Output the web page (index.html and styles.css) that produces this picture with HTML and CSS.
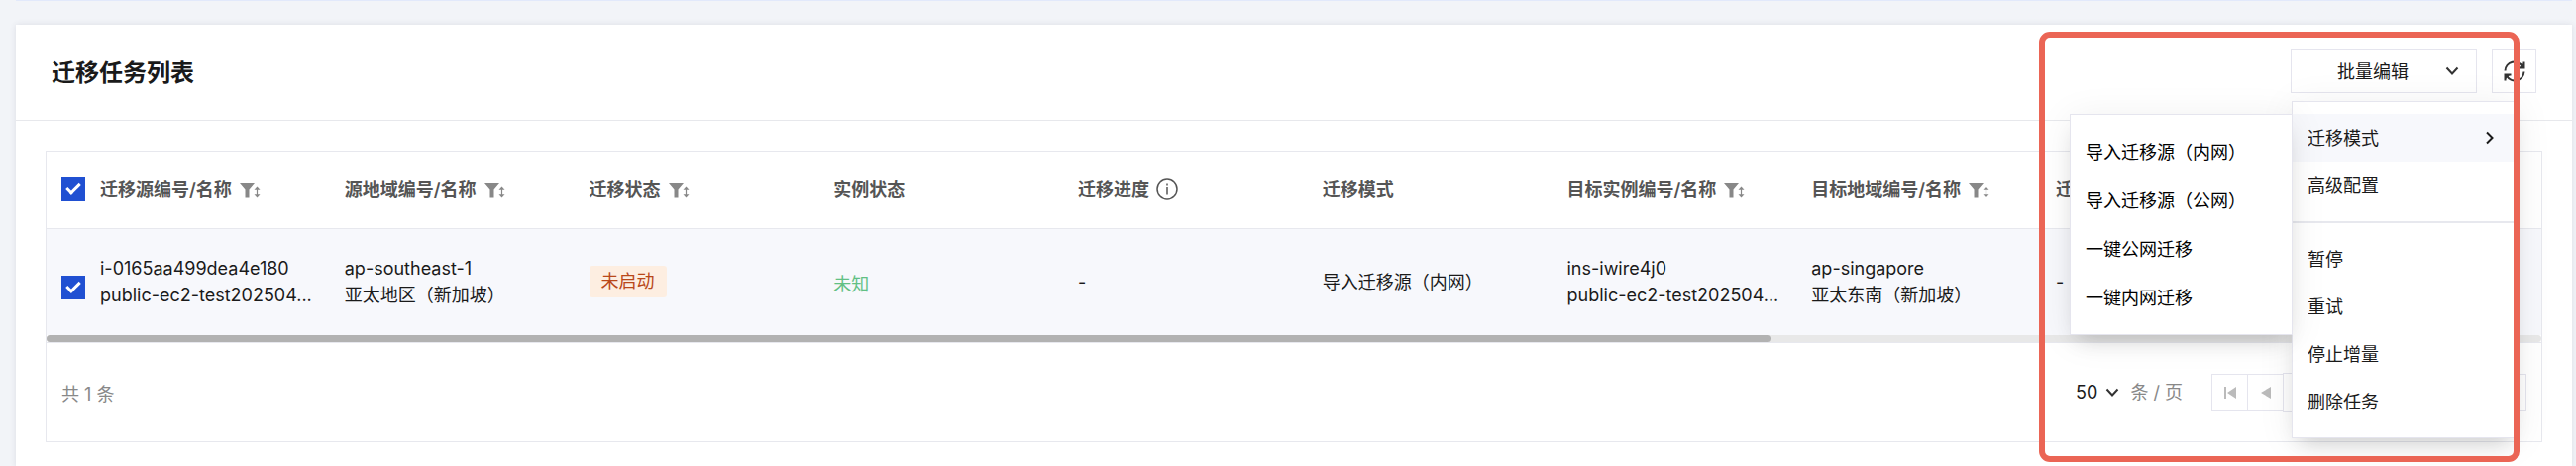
FILE: index.html
```html
<!DOCTYPE html>
<html lang="zh-CN">
<head>
<meta charset="utf-8">
<title>迁移任务列表</title>
<link rel="stylesheet" href="styles.css">
</head>
<body>
<svg class="sprite" aria-hidden="true">
  <symbol id="filter" viewBox="0 0 21 16">
    <path fill="#888" d="M0 1h15l-5.500 6.500V15.500h-4V7.500z"/>
    <path fill="none" stroke="#888" stroke-width="1.200" d="M17.500 6.500v7"/>
    <path fill="#888" d="M17.500 4.500l3 3.200h-6zM17.500 15.500l3-3.200h-6z"/>
  </symbol>
  <symbol id="down" viewBox="0 0 14 10">
    <path fill="none" stroke="currentColor" stroke-width="2" d="M1.500 1.500L7 7.500l5.500-6"/>
  </symbol>
</svg>
<main class="panel">
  <header class="panel-head">
    <h1 class="title">迁移任务列表</h1>
    <div class="tools">
      <div class="dropdown">
        <button class="dropdown-btn" type="button"><span class="dropdown-label">批量编辑</span><svg class="chevron"><use href="#down"/></svg></button>
        <div class="menu">
          <button class="item item-active" type="button">迁移模式<svg class="arrow" viewBox="0 0 10 14"><path fill="none" stroke="currentColor" stroke-width="2" d="M2 1.500L7.500 7L2 12.500"/></svg></button>
          <button class="item" type="button">高级配置</button>
          <hr class="divider">
          <button class="item" type="button">暂停</button>
          <button class="item" type="button">重试</button>
          <button class="item" type="button">停止增量</button>
          <button class="item" type="button">删除任务</button>
          <div class="submenu">
            <button class="item" type="button">导入迁移源（内网）</button>
            <button class="item" type="button">导入迁移源（公网）</button>
            <button class="item" type="button">一键公网迁移</button>
            <button class="item" type="button">一键内网迁移</button>
          </div>
        </div>
      </div>
      <button class="refresh" type="button" aria-label="刷新"><svg class="refresh-icon" viewBox="0 0 22 22"><path fill="none" stroke="currentColor" stroke-width="2" d="M1.500 10.500A9.300 9.300 0 0 1 19 6.500M20.500 1.500v6h-6M20.500 11.500A9.300 9.300 0 0 1 3 15.500M1.500 20.500v-6h6"/><path fill="currentColor" d="M20.500 2.500v5h-5zM1.500 19.500v-5h5z"/></svg></button>
    </div>
  </header>
  <section class="grid">
    <div class="scroller">
      <table class="table">
        <colgroup><col class="col-check"><col class="col"><col class="col"><col class="col"><col class="col"><col class="col"><col class="col"><col class="col"><col class="col"><col></colgroup>
        <thead>
          <tr>
            <th class="check"><input class="box" type="checkbox" checked aria-label="全选"></th>
            <th>迁移源编号/名称<svg class="filter"><use href="#filter"/></svg></th>
            <th>源地域编号/名称<svg class="filter"><use href="#filter"/></svg></th>
            <th>迁移状态<svg class="filter"><use href="#filter"/></svg></th>
            <th>实例状态</th>
            <th>迁移进度<svg class="info" viewBox="0 0 22 22"><circle cx="11" cy="11" r="10" fill="none" stroke="currentColor" stroke-width="1.500"/><path fill="none" stroke="currentColor" stroke-width="1.500" d="M11 9v7.500M11 5.500v2"/></svg></th>
            <th>迁移模式</th>
            <th>目标实例编号/名称<svg class="filter"><use href="#filter"/></svg></th>
            <th>目标地域编号/名称<svg class="filter"><use href="#filter"/></svg></th>
            <th>迁移</th>
          </tr>
        </thead>
        <tbody>
          <tr>
            <td class="check check-low"><input class="box" type="checkbox" checked aria-label="选择 i-0165aa499dea4e180"></td>
            <td>i-0165aa499dea4e180<br>public-ec2-test202504...</td>
            <td>ap-southeast-1<br>亚太地区（新加坡）</td>
            <td><span class="tag">未启动</span></td>
            <td><span class="unknown">未知</span></td>
            <td>-</td>
            <td>导入迁移源（内网）</td>
            <td>ins-iwire4j0<br>public-ec2-test202504...</td>
            <td>ap-singapore<br>亚太东南（新加坡）</td>
            <td>-</td>
          </tr>
        </tbody>
      </table>
      <div class="track"><div class="thumb"></div></div>
    </div>
    <footer class="foot">
      <span class="total">共 1 条</span>
      <div class="pager">
        <button class="size" type="button">50<svg class="chevron"><use href="#down"/></svg></button>
        <span class="unit">条 / 页</span>
        <div class="pages">
          <button class="page" type="button" aria-label="首页"><svg class="page-icon" viewBox="0 0 14 14"><path fill="#bbb" d="M1 1h2v12H1zM13 1v12L4 7z"/></svg></button>
          <button class="page" type="button" aria-label="上一页"><svg class="page-icon" viewBox="0 0 14 14"><path fill="#bbb" d="M12 1v12L2 7z"/></svg></button>
          <input class="jump" type="text" aria-label="页码">
          <button class="page" type="button" aria-label="下一页"></button>
          <button class="page" type="button" aria-label="末页"></button>
        </div>
      </div>
    </footer>
  </section>
  <div class="marker"></div>
</main>
</body>
</html>
```
FILE: styles.css
```css
*, *::before, *::after { box-sizing: border-box; }
body {
  margin: 0;
  min-height: 100vh;
  padding: 24px 4px 0 16px;
  display: flex;
  flex-direction: column;
  background: #f2f4f8;
  color: #1a1a1a;
  font: 18px/27px Inter, "Noto Sans CJK SC", sans-serif;
}
body::before {
  content: "";
  height: 1px;
  margin: -24px 0 24px;
  background: #e2e9fb;
}
button, input { font: inherit; color: inherit; }
button { cursor: pointer; }
.sprite { display: none; }
.panel {
  position: relative;
  flex: 1;
  background: #fff;
  box-shadow: 0 0 6px rgba(54, 58, 80, .12);
}
.panel-head {
  display: flex;
  align-items: flex-start;
  justify-content: space-between;
  height: 97px;
  padding: 24px 36px 0;
  border-bottom: 1px solid #e7e8ec;
}
.title { margin: 0; font-size: 24px; line-height: 50px; font-weight: 600; }
.tools { display: flex; gap: 15px; }
.dropdown { position: relative; }
.dropdown-btn {
  display: flex;
  align-items: center;
  width: 188px;
  height: 45px;
  padding: 0 17px 0 9px;
  background: #fff;
  border: 1px solid #e5e5ee;
}
.dropdown-label { flex: 1; padding-top: 2px; }
.chevron { width: 14px; height: 10px; color: #333; }
.refresh {
  display: flex;
  align-items: center;
  justify-content: center;
  width: 45px;
  height: 45px;
  padding: 0;
  background: #fff;
  border: 1px solid #e5e5ee;
}
.refresh-icon { width: 22px; height: 22px; color: #333; }
.menu, .submenu {
  position: absolute;
  background: #fff;
  border: 1px solid #e5e5ee;
  box-shadow: 0 12px 20px -8px rgba(0, 0, 0, .16), 0 4px 36px rgba(0, 0, 0, .07);
}
.menu { z-index: 2; top: 53px; left: 1px; width: 228px; padding: 12px 0; }
.submenu { top: 12px; right: 100%; width: 225px; padding: 13px 0 12px; }
.item {
  display: flex;
  align-items: center;
  justify-content: space-between;
  width: 100%;
  height: 48px;
  padding: 0 22px 0 15px;
  background: none;
  border: 0;
  text-align: left;
}
.submenu .item { height: 49px; color: #000; }
.item-active { background: #f7f8fc; }
.arrow { width: 10px; height: 14px; }
.divider { height: 2px; margin: 12px 0; border: 0; background: #e7e8ee; }
.grid { margin: 30px 30px 25px; border: 1px solid #e7e8ee; }
.scroller { overflow: hidden; border-bottom: 1px solid #e7e8ee; }
.table { width: 100%; table-layout: fixed; border-collapse: collapse; }
.col-check { width: 40px; }
.col { width: 9.8%; }
th, td { padding: 0 0 0 14px; text-align: left; white-space: nowrap; }
th {
  height: 77px;
  color: #555;
  font-weight: 600;
  border-bottom: 1px solid #e7e8ee;
}
td { height: 108px; background: #f7f8fc; }
.check { padding: 0 0 0 15px; }
.check-low { padding-top: 12px; }
.box {
  display: block;
  appearance: none;
  width: 24px;
  height: 24px;
  margin: 0;
  background: #2050d2;
  position: relative;
}
.box::after {
  content: "";
  position: absolute;
  left: 5px;
  top: 6px;
  width: 14px;
  height: 8px;
  border: solid #fff;
  border-width: 0 0 3px 3px;
  transform: rotate(-45deg);
}
.filter { width: 21px; height: 16px; margin-left: 8px; vertical-align: -2px; }
.info { width: 22px; height: 22px; margin-left: 7px; vertical-align: -4px; }
.tag {
  display: inline-block;
  height: 32px;
  padding: 0 12px;
  line-height: 32px;
  background: #fdeee1;
  color: #b9481a;
  border-radius: 3px;
}
.unknown { display: block; padding-top: 5px; color: #62c084; }
.track { height: 7px; background: #e8e8e8; border-radius: 4px; }
.thumb { width: 69.100%; height: 7px; background: #b2b2b2; border-radius: 4px; }
.foot {
  display: flex;
  align-items: center;
  justify-content: space-between;
  height: 99px;
  padding: 0 15px;
  color: #888;
}
.total { padding-top: 3px; }
.pager { display: flex; align-items: center; }
.size {
  display: flex;
  align-items: center;
  gap: 8px;
  padding: 0;
  border: 0;
  background: none;
  color: #1a1a1a;
}
.unit { margin: 0 29px 0 11px; }
.pages { display: flex; align-items: center; width: 318px; }
.page {
  display: flex;
  align-items: center;
  justify-content: center;
  width: 37px;
  height: 38px;
  margin-right: -1px;
  padding: 0;
  background: #fff;
  border: 1px solid #e5e5ee;
}
.page:last-child { margin-right: 0; }
.page-icon { width: 14px; height: 14px; }
.jump {
  width: 64px;
  height: 40px;
  margin-right: auto;
  background: #fff;
  border: 1px solid #e5e5ee;
}
.marker {
  position: absolute;
  z-index: 3;
  top: 7px;
  right: 53px;
  width: 485px;
  height: 434px;
  border: 6px solid #eb6555;
  border-radius: 11px;
  pointer-events: none;
}
```
